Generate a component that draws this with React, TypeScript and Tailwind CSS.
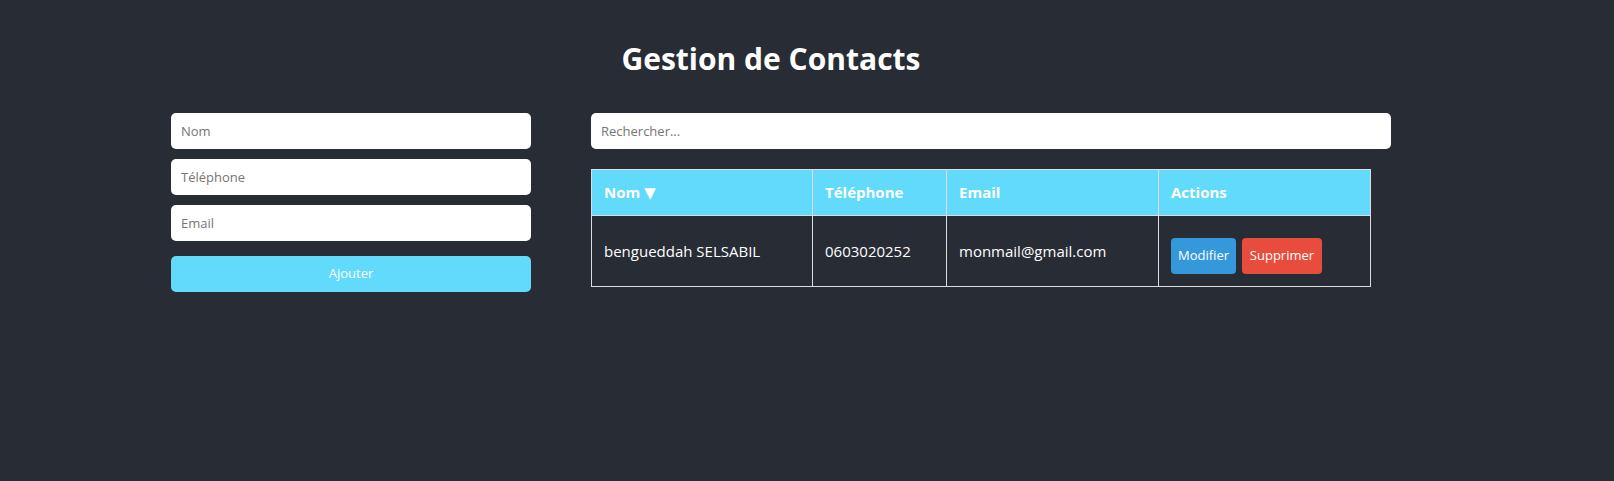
import React from "react";

export default function App() {
  const font = { fontFamily: '"Open Sans", "Noto Sans", sans-serif' };
  return (
    <div className="min-h-[481px] w-full bg-[#282c34] text-white" style={font}>
      <div className="ml-[171px] w-[1200px] pt-[39px]">
        <h1 className="text-center text-[30px] font-bold leading-[40px] text-white">Gestion de Contacts</h1>
        <div className="mt-[34px] flex gap-[80px]">
          <div className="flex w-[340px] flex-col">
            <input
              placeholder="Nom"
              className="box-content h-[36px] w-[340px] rounded-[5px] bg-white px-[10px] text-[13px] text-black outline-none placeholder:text-[#757575]"
            />
            <input
              placeholder="Téléphone"
              className="mt-[10px] box-content h-[36px] w-[340px] rounded-[5px] bg-white px-[10px] text-[13px] text-black outline-none placeholder:text-[#757575]"
            />
            <input
              placeholder="Email"
              className="mt-[10px] box-content h-[36px] w-[340px] rounded-[5px] bg-white px-[10px] text-[13px] text-black outline-none placeholder:text-[#757575]"
            />
            <button className="mt-[15px] box-content h-[36px] w-[340px] rounded-[5px] bg-[#61dafb] px-[10px] text-[13px] text-white">
              Ajouter
            </button>
          </div>
          <div className="w-[780px]">
            <input
              placeholder="Rechercher..."
              className="box-content h-[36px] w-[780px] rounded-[5px] bg-white px-[10px] text-[13px] text-black outline-none placeholder:text-[#757575]"
            />
            <table className="mt-[20px] w-[780px] border-collapse text-left text-[15px]">
              <thead>
                <tr className="bg-[#61dafb]">
                  <th className="h-[46px] w-[221px] border border-[#dddddd] px-[12px] font-bold">
                    Nom{" "}
                    <span className="text-[15px]" style={{ fontFamily: '"DejaVu Sans", sans-serif' }}>
                      ▼
                    </span>
                  </th>
                  <th className="w-[134px] border border-[#dddddd] px-[12px] font-bold">Téléphone</th>
                  <th className="w-[212px] border border-[#dddddd] px-[12px] font-bold">Email</th>
                  <th className="border border-[#dddddd] px-[12px] font-bold">Actions</th>
                </tr>
              </thead>
              <tbody>
                <tr>
                  <td className="h-[71px] border border-[#dddddd] px-[12px]">bengueddah SELSABIL</td>
                  <td className="border border-[#dddddd] px-[12px]">0603020252</td>
                  <td className="border border-[#dddddd] px-[12px]">monmail@gmail.com</td>
                  <td className="border border-[#dddddd] px-[12px]">
                    <div className="mt-[10px] flex gap-[6px]">
                      <button className="h-[36px] w-[65px] rounded-[4px] bg-[#3498db] text-[13px] text-white">Modifier</button>
                      <button className="h-[36px] w-[80px] rounded-[4px] bg-[#e74c3c] text-[13px] text-white">Supprimer</button>
                    </div>
                  </td>
                </tr>
              </tbody>
            </table>
          </div>
        </div>
      </div>
    </div>
  );
}
